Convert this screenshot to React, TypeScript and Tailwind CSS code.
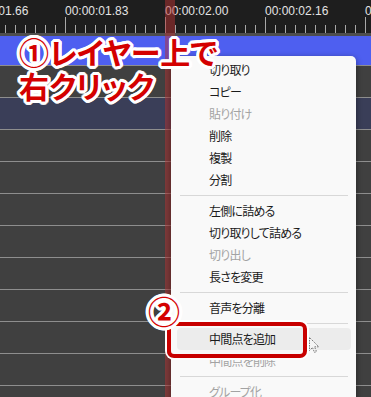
import React from "react";

const ticks = Array.from({ length: 37 }, (_, k) => 5.5 + 10 * k);

type Item = { label: string; disabled?: boolean; active?: boolean } | "sep";

const items: Item[] = [
  { label: "切り取り" },
  { label: "コピー" },
  { label: "貼り付け", disabled: true },
  { label: "削除" },
  { label: "複製" },
  { label: "分割" },
  "sep",
  { label: "左側に詰める" },
  { label: "切り取りして詰める" },
  { label: "切り出し", disabled: true },
  { label: "長さを変更" },
  "sep",
  { label: "音声を分離" },
  "sep",
  { label: "中間点を追加", active: true },
  { label: "中間点を削除", disabled: true },
  "sep",
  { label: "グループ化", disabled: true },
];

const labels = [
  { x: -35, t: "00:00:01.66" },
  { x: 65, t: "00:00:01.83" },
  { x: 165, t: "00:00:02.00" },
  { x: 265, t: "00:00:02.16" },
  { x: 365, t: "00:00:02.33" },
];

const outline =
  "[text-shadow:3px_0_0_#fff,-3px_0_0_#fff,0_3px_0_#fff,0_-3px_0_#fff,2px_2px_0_#fff,-2px_2px_0_#fff,2px_-2px_0_#fff,-2px_-2px_0_#fff,3px_1px_0_#fff,-3px_1px_0_#fff,3px_-1px_0_#fff,-3px_-1px_0_#fff,1px_3px_0_#fff,-1px_3px_0_#fff,1px_-3px_0_#fff,-1px_-3px_0_#fff]";

export default function App() {
  return (
    <div className="relative w-[371px] h-[397px] overflow-hidden bg-[#404040] font-['Noto_Sans_CJK_JP',sans-serif] flex flex-col">
      {/* Ruler */}
      <div className="relative h-[33px] shrink-0 bg-[#1e1e1e]">
        {labels.map((l) => (
          <span
            key={l.t}
            className="absolute top-[3px] text-[12px] leading-[16px] text-[#e4e4e4] font-['Liberation_Sans',Arial,sans-serif] whitespace-nowrap"
            style={{ left: l.x }}
          >
            {l.t}
          </span>
        ))}
        <svg className="absolute left-0 top-0" width="371" height="33">
          {ticks.map((x) => {
            const major = Math.abs(((x - 65.5) % 100 + 100) % 100) < 0.01;
            return (
              <line
                key={x}
                x1={x}
                x2={x}
                y1={major ? 17 : 25}
                y2={33}
                stroke="#a8a8a8"
                strokeWidth="1"
              />
            );
          })}
        </svg>
      </div>
      <div className="h-[3px] shrink-0 bg-[#4e4e4e]" />
      {/* Blue layer row */}
      <div className="h-[29px] shrink-0 bg-[#4e5ff0]" />
      {/* Track rows */}
      {Array.from({ length: 11 }).map((_, i) => (
        <div
          key={i}
          className={`h-[32px] shrink-0 border-t border-[#8e8e8e] ${i === 1 ? "bg-[#3a3e58]" : "bg-[#404040]"}`}
        />
      ))}

      {/* Playhead */}
      <div className="absolute left-[165px] top-0 w-[10px] h-full bg-[rgba(184,50,50,0.5)]" />

      {/* Context menu */}
      <div className="absolute left-[171px] top-[56px] w-[185px] h-[360px] rounded-[5px] bg-[#f9f9f9] pt-[3px] shadow-[0_2px_6px_rgba(0,0,0,0.45)] text-[12px] tracking-[-0.8px] [font-feature-settings:'palt'] flex flex-col">
        {items.map((it, i) =>
          it === "sep" ? (
            <div key={i} className="h-[9px] flex items-center pl-[9px] pr-[8px]">
              <div className="h-px w-full bg-[#d8d8d8]" />
            </div>
          ) : (
            <div key={i} className="h-[22px] pl-[6px] pr-[5px] flex">
              <div
                className={`flex-1 rounded-[4px] pl-[32px] flex items-center leading-none whitespace-nowrap ${
                  it.active ? "bg-[#ececec]" : ""
                } ${it.disabled ? "text-[#a3a3a3]" : "text-[#1b1b1b]"}`}
              >
                {it.label}
              </div>
            </div>
          )
        )}
      </div>

      {/* Red highlight box */}
      <div className="absolute left-[167px] top-[322px] w-[140px] h-[36px] rounded-[7px] border-[4px] border-[#c80000] shadow-[0_0_0_2px_#fff]" />

      {/* Cursor */}
      <svg className="absolute left-[309px] top-[337px]" width="12" height="18" viewBox="0 0 12 18">
        <path
          d="M0.5 0.5 L0.5 13.5 L3.5 10.5 L5.5 15.5 L7.5 14.5 L5.5 9.8 L9.8 9.8 Z"
          fill="#f4f4f4"
          stroke="#7a7a7a"
          strokeWidth="1"
          strokeDasharray="1.5 1"
        />
      </svg>

      {/* Annotation 1 */}
      <div
        className={`absolute left-[19px] top-[34px] text-[30px] leading-[34px] font-bold text-[#d40000] whitespace-nowrap [font-feature-settings:'palt'] ${outline}`}
      >
        <div>①レイヤー上で</div>
        <div>右クリック</div>
      </div>

      {/* Annotation 2 */}
      <div
        className={`absolute left-[148px] top-[291px] text-[32px] leading-[38px] font-bold text-[#d40000] ${outline}`}
      >
        ②
      </div>
    </div>
  );
}
